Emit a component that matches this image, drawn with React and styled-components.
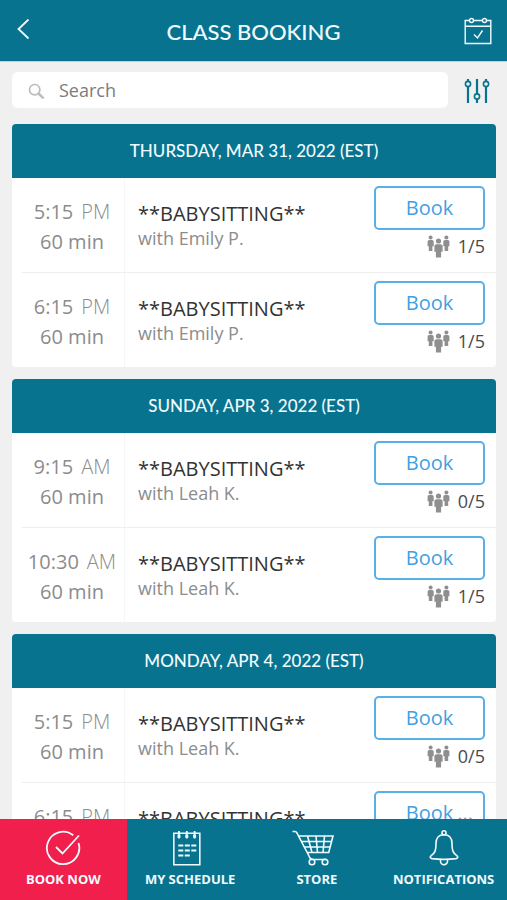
import React from 'react';
import styled, { createGlobalStyle, ThemeProvider } from 'styled-components';

const theme = {
  colors: {
    primary: '#08738f',
    accent: '#f01f4b',
    link: '#429fe3',
    page: '#f0f0f0',
    surface: '#ffffff',
    line: '#eeeeee',
    text: '#333333',
    muted: '#8c8c8c',
  },
  fonts: {
    body: '"Open Sans", "Noto Sans", sans-serif',
    heading: 'Lato, "Open Sans", sans-serif',
  },
};

const GlobalStyle = createGlobalStyle`
  * {
    box-sizing: border-box;
  }

  body {
    margin: 0;
    background: ${theme.colors.page};
    color: ${theme.colors.text};
    font-family: ${theme.fonts.body};
  }

  button,
  input {
    font-family: inherit;
  }
`;

const Screen = styled.div`
  display: flex;
  flex-direction: column;
  height: 100vh;
  overflow: hidden;
`;

const Header = styled.header`
  display: flex;
  flex: none;
  align-items: center;
  justify-content: space-between;
  height: 62px;
  padding: 0 14px;
  border-bottom: 1px solid #b5d3dc;
  background: ${props => props.theme.colors.primary};
  color: #f0fbff;
`;

const Title = styled.h1`
  margin: 0;
  padding-top: 2px;
  font-family: ${props => props.theme.fonts.heading};
  font-size: 22px;
  font-weight: 500;
  line-height: 30px;
`;

const IconButton = styled.button`
  display: flex;
  flex: none;
  align-items: center;
  justify-content: ${props => props.$align || 'center'};
  width: 30px;
  height: 36px;
  padding: 0;
  border: 0;
  background: none;
  color: ${props => (props.$primary ? props.theme.colors.primary : 'inherit')};
`;

const Toolbar = styled.div`
  display: flex;
  flex: none;
  align-items: center;
  gap: 14px;
  padding: 10px 15px 16px 12px;
`;

const SearchField = styled.label`
  display: flex;
  flex: 1;
  align-items: center;
  gap: 14px;
  height: 36px;
  padding: 0 16px;
  border-radius: 6px;
  background: ${props => props.theme.colors.surface};
  color: #bdbdbd;
`;

const SearchInput = styled.input`
  flex: 1;
  min-width: 0;
  padding: 0;
  border: 0;
  outline: 0;
  background: none;
  color: ${props => props.theme.colors.text};
  font-size: 18px;
  line-height: 24px;

  &::placeholder {
    color: #7d7d7d;
    opacity: 1;
  }
`;

const Schedule = styled.main`
  display: flex;
  flex: 1;
  flex-direction: column;
  gap: 12px;
  min-height: 0;
  padding: 0 11px 12px 12px;
  overflow-y: auto;
  scrollbar-width: none;
`;

const Day = styled.section`
  flex: none;
  overflow: hidden;
  border-radius: 4px;
  background: ${props => props.theme.colors.surface};
`;

const DayTitle = styled.h2`
  margin: 0;
  background: ${props => props.theme.colors.primary};
  color: #f0fbff;
  font-family: ${props => props.theme.fonts.heading};
  font-size: 17px;
  font-weight: 500;
  line-height: 54px;
  text-align: center;
`;

const ClassList = styled.ul`
  margin: 0;
  padding: 0 0 0 10px;
  list-style: none;
`;

const ClassRow = styled.li`
  position: relative;
  display: flex;

  & + & {
    border-top: 1px solid ${props => props.theme.colors.line};
  }
`;

const When = styled.div`
  flex: none;
  width: 103px;
  height: 94px;
  padding: 19px 2px 0 0;
  border-right: 1px solid #f4f7f7;
  color: ${props => props.theme.colors.muted};
  font-size: 20px;
  line-height: 30px;
  text-align: center;
  white-space: nowrap;
`;

const Period = styled.span`
  margin-left: 8px;
  font-weight: 300;
`;

const Details = styled.div`
  flex: 1;
  min-width: 0;
  padding: 23px 0 0 13px;
`;

const ClassName = styled.h3`
  margin: 0;
  font-size: 20px;
  font-weight: 400;
  line-height: 25px;
  white-space: nowrap;
`;

const Instructor = styled.p`
  margin: 0;
  color: ${props => props.theme.colors.muted};
  font-size: 18px;
  line-height: 25px;
`;

const Actions = styled.div`
  flex: none;
  width: 122px;
  padding: 8px 11px 0 0;
`;

const BookButton = styled.button`
  width: 100%;
  height: 44px;
  padding: 0;
  border: 2px solid #59afea;
  border-radius: 5px;
  background: ${props => props.theme.colors.surface};
  color: ${props => props.theme.colors.link};
  font-size: 20px;
  line-height: 28px;
`;

const Spots = styled.div`
  display: flex;
  align-items: center;
  justify-content: flex-end;
  gap: 8px;
  padding-top: 4px;
  color: #4a4a4a;
  font-size: 18px;
  line-height: 25px;
`;

const Loading = styled.span`
  position: absolute;
  top: 18px;
  right: 23px;
  color: #9a9a9a;
  font-size: 20px;
  line-height: 24px;
`;

const TabBar = styled.nav`
  display: flex;
  flex: none;
  height: 81px;
  background: ${props => props.theme.colors.primary};
`;

const Tab = styled.a`
  display: flex;
  flex: 1 1 0;
  flex-direction: column;
  align-items: center;
  gap: 3px;
  padding-top: 11px;
  background: ${props => (props.$active ? props.theme.colors.accent : 'none')};
  color: #f0fbff;
  font-size: 13px;
  font-weight: 700;
  line-height: 20px;
  text-decoration: none;
  white-space: nowrap;
`;

const Icon = styled.svg`
  display: block;
  flex: none;
  fill: none;
  stroke: currentColor;
  stroke-width: ${props => props.$weight || 1.5};
`;

const BackIcon = () => (
  <Icon width="18" height="24" viewBox="0 0 18 24" $weight={1.8}>
    <path d="M14.5 .5 4.5 10l10 9.500" />
  </Icon>
);

const CalendarIcon = () => (
  <Icon width="28" height="28" viewBox="0 0 28 28" $weight={1.4}>
    <path d="M5.5 3.5H1.2v23h25.6v-23h-4.3M9.500 3.500h9M1.200 9.300h25.600" />
    <circle cx="7.5" cy="3.5" r="2" />
    <circle cx="20.5" cy="3.5" r="2" />
    <path d="m10 17.5 3.5 3.500 5-7.500" />
  </Icon>
);

const SearchIcon = () => (
  <Icon width="17" height="17" viewBox="0 0 17 17" $weight={1.7}>
    <circle cx="6.7" cy="7.7" r="5.2" />
    <path d="m10.8 11.8 4 3.8" strokeWidth="2.6" strokeLinecap="round" />
  </Icon>
);

const FilterIcon = () => (
  <Icon width="26" height="26" viewBox="0 0 26 26" $weight={1.6}>
    <path
      d="M4 2v2.500M4 9.500V26M13 2v15M13 22v4M22 2v2.500M22 9.500V26"
      strokeWidth="2.2"
    />
    <circle cx="4" cy="7" r="2.6" />
    <circle cx="13" cy="19.5" r="2.6" />
    <circle cx="22" cy="7" r="2.6" />
  </Icon>
);

const PeopleIcon = () => (
  <svg width="23" height="23" viewBox="0 0 23 23" fill="#8f8f8f">
    <circle cx="3.6" cy="2.6" r="2" />
    <path d="M2.200 5H5q1.700 0 1.700 1.600v4.700H5.400V16H1.800v-4.700H.6V6.600Q.6 5 2.200 5Z" />
    <circle cx="19.4" cy="2.6" r="2" />
    <path d="M18 5h2.800q1.600 0 1.600 1.600v4.700h-1.200V16h-3.600v-4.700h-1.300V6.600Q16.300 5 18 5Z" />
    <circle cx="11.5" cy="6" r="2.6" />
    <path d="M9.400 9.200h4.200q2 0 2 2v5.600h-1.500V22.500H8.900v-5.700H7.400v-5.600q0-2 2-2Z" />
  </svg>
);

const BookNowIcon = () => (
  <Icon width="36" height="36" viewBox="0 0 36 36" $weight={1.8}>
    <path d="M28.200 5.300A16.200 16.200 0 1 0 33.500 13" />
    <path d="m11 17 6.500 6.500L34 5.500" />
  </Icon>
);

const ScheduleIcon = () => (
  <Icon width="42" height="36" viewBox="0 0 42 36" $weight={1.6}>
    <path d="M4.800 3.300h26v31.500h-26z" />
    <path d="M10 1v7.500M17.800 1v7.500M25.600 1v7.500" strokeWidth="1.800" />
    <path d="M8.500 6.300h3M16.300 6.300h3M24.100 6.300h3" strokeWidth="3" />
    <path
      d="M9.300 15.500h18M9.300 20.500h18M9.300 25.500h11.500"
      strokeDasharray="5 1.5"
      strokeWidth="1.800"
    />
  </Icon>
);

const StoreIcon = () => (
  <Icon width="50" height="36" viewBox="0 0 50 36" $weight={1.6}>
    <path d="M.5 1.500H3q1.200 0 1.900 1.400L16.500 25l1.500 3q1 1.500 2.500 1.500H34" />
    <path d="M7 6h34l-4.300 16.500H15.500M9.500 11.500h30M12.500 17h25.500M15.500 6l4.500 16.500M24 6l1.500 16.500M32.500 6 31 22.500" />
    <circle cx="20" cy="32" r="2.8" />
    <circle cx="33" cy="32" r="2.8" />
  </Icon>
);

const BellIcon = () => (
  <Icon width="36" height="36" viewBox="0 0 36 36" $weight={1.6}>
    <circle cx="18" cy="2.8" r="2" />
    <path d="M18 4.800c-5.500 0-8 3.800-8 9 0 6.500-.8 9-4.800 11.800-1.500 1.200-1.200 2.600.8 3 7.500 1 16.500 1 24 0 2-.4 2.300-1.800.8-3-4-2.800-4.800-5.300-4.800-11.800 0-5.200-2.500-9-8-9Z" />
    <path d="M14.500 29.500v1.700a3.500 3.500 0 0 0 7 0v-1.700" />
  </Icon>
);

const days = [
  {
    title: 'THURSDAY, MAR 31, 2022 (EST)',
    classes: [
      { time: '5:15', period: 'PM', instructor: 'Emily P.', spots: '1/5' },
      { time: '6:15', period: 'PM', instructor: 'Emily P.', spots: '1/5' },
    ],
  },
  {
    title: 'SUNDAY, APR 3, 2022 (EST)',
    classes: [
      { time: '9:15', period: 'AM', instructor: 'Leah K.', spots: '0/5' },
      { time: '10:30', period: 'AM', instructor: 'Leah K.', spots: '1/5' },
    ],
  },
  {
    title: 'MONDAY, APR 4, 2022 (EST)',
    classes: [
      { time: '5:15', period: 'PM', instructor: 'Leah K.', spots: '0/5' },
      {
        time: '6:15',
        period: 'PM',
        instructor: 'Leah K.',
        spots: '0/5',
        loading: true,
      },
    ],
  },
];

const tabs = [
  { label: 'BOOK NOW', icon: BookNowIcon, active: true },
  { label: 'MY SCHEDULE', icon: ScheduleIcon },
  { label: 'STORE', icon: StoreIcon },
  { label: 'NOTIFICATIONS', icon: BellIcon },
];

const ClassItem = ({ time, period, instructor, spots, loading }) => (
  <ClassRow>
    <When>
      <div>
        {time}
        <Period>{period}</Period>
      </div>
      <div>60 min</div>
    </When>
    <Details>
      <ClassName>**BABYSITTING**</ClassName>
      <Instructor>with {instructor}</Instructor>
    </Details>
    <Actions>
      <BookButton type="button">Book</BookButton>
      <Spots>
        <PeopleIcon />
        {spots}
      </Spots>
    </Actions>
    {loading && <Loading>...</Loading>}
  </ClassRow>
);

const App = () => (
  <ThemeProvider theme={theme}>
    <GlobalStyle />
    <Screen>
      <Header>
        <IconButton type="button" aria-label="Back" $align="flex-start">
          <BackIcon />
        </IconButton>
        <Title>CLASS BOOKING</Title>
        <IconButton type="button" aria-label="Calendar">
          <CalendarIcon />
        </IconButton>
      </Header>
      <Toolbar>
        <SearchField>
          <SearchIcon />
          <SearchInput type="text" placeholder="Search" aria-label="Search" />
        </SearchField>
        <IconButton type="button" aria-label="Filters" $primary>
          <FilterIcon />
        </IconButton>
      </Toolbar>
      <Schedule>
        {days.map(day => (
          <Day key={day.title}>
            <DayTitle>{day.title}</DayTitle>
            <ClassList>
              {day.classes.map(item => (
                <ClassItem key={item.time} {...item} />
              ))}
            </ClassList>
          </Day>
        ))}
      </Schedule>
      <TabBar>
        {tabs.map(({ label, icon: TabIcon, active }) => (
          <Tab key={label} href="#" $active={active}>
            <TabIcon />
            {label}
          </Tab>
        ))}
      </TabBar>
    </Screen>
  </ThemeProvider>
);

export default App;
